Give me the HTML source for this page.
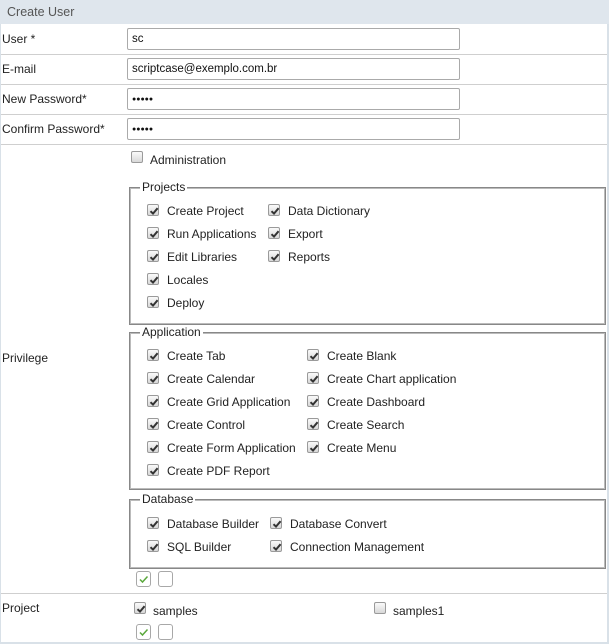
<!DOCTYPE html>
<html><head><meta charset="utf-8"><style>
*{margin:0;padding:0;box-sizing:border-box}
body{width:609px;height:644px;background:#fff;font-family:"Liberation Sans",Arial,sans-serif;font-size:12px;color:#222;position:relative;overflow:hidden}
.frame{position:absolute;left:0;top:0;width:609px;height:644px;border:1px solid #d9e1e8;border-right-width:2px;border-top:0;border-bottom-width:2px}
.hdr{position:absolute;left:0;top:0;width:609px;height:24px;background:#dfe6ed;color:#555;font-size:12.5px;padding:5px 0 0 7px}
.hl{position:absolute;left:1px;width:606px;height:1px;background:#cfcfcf}
.inp{position:absolute;left:127px;width:333px;height:22px;border:1px solid #aaa;border-radius:2px;padding:4px 0 0 4px;font-size:11.5px;color:#111}
.pw{font-size:7px;padding-top:7px;letter-spacing:0}
.lb{position:absolute;left:2px;font-size:12px}
.cb{position:absolute;width:12px;height:12px;border:1px solid #9a9a9a;border-radius:2px;background:linear-gradient(#fafafa,#d8d8d8)}
.cb svg{position:absolute;left:1px;top:1px}
.fs{position:absolute;left:129px;width:477px;border:1px solid #888;outline:1px solid #bbb;outline-offset:-2px}
.lg{position:absolute;background:#fff;padding:0 2px;font-size:12px}
.t{position:absolute;font-size:12px;white-space:nowrap}
.gb{position:absolute;width:15px;height:16px;border:1px solid #a8a8a8;border-radius:3px;background:#fff}
</style></head><body>
<div class="frame"></div>
<div class="hdr">Create User</div>
<div class="hl" style="top:54px"></div>
<div class="hl" style="top:84px"></div>
<div class="hl" style="top:114px"></div>
<div class="hl" style="top:144px"></div>
<div class="hl" style="top:593px"></div>

<div class="lb" style="top:32px">User *</div>
<div class="lb" style="top:62px">E-mail</div>
<div class="lb" style="top:92px">New Password*</div>
<div class="lb" style="top:122px">Confirm Password*</div>
<div class="lb" style="top:351px">Privilege</div>
<div class="lb" style="top:601px">Project</div>

<div class="inp" style="top:28px">sc</div>
<div class="inp" style="top:58px">scriptcase@exemplo.com.br</div>
<div class="inp pw" style="top:88px">●●●●●</div>
<div class="inp pw" style="top:118px">●●●●●</div>

<div class="fs" style="top:187px;height:138px"></div>
<div class="lg" style="left:140px;top:180px">Projects</div>
<div class="fs" style="top:332px;height:158px"></div>
<div class="lg" style="left:140px;top:325px">Application</div>
<div class="fs" style="top:499px;height:70px"></div>
<div class="lg" style="left:140px;top:492px">Database</div>

<script>
var ck='<svg width="10" height="10" viewBox="0 0 10 10"><path d="M1.5 5.2 L4 7.6 L8.6 2.2" stroke="#333" stroke-width="2" fill="none"/></svg>';
function cb(x,y,c){document.write('<div class="cb" style="left:'+x+'px;top:'+y+'px">'+(c?ck:'')+'</div>');}
function t(x,y,s){document.write('<div class="t" style="left:'+x+'px;top:'+y+'px">'+s+'</div>');}
function item(x,tx,y,s){cb(x,y-7,1);t(tx,y-7,s);}
cb(131,151,0);t(150,153,'Administration');
['Create Project','Run Applications','Edit Libraries','Locales','Deploy'].forEach(function(s,i){item(147,167,211+23*i,s)});
['Data Dictionary','Export','Reports'].forEach(function(s,i){item(268,288,211+23*i,s)});
['Create Tab','Create Calendar','Create Grid Application','Create Control','Create Form Application','Create PDF Report'].forEach(function(s,i){item(147,167,356+23*i,s)});
['Create Blank','Create Chart application','Create Dashboard','Create Search','Create Menu'].forEach(function(s,i){item(307,327,356+23*i,s)});
item(147,167,524,'Database Builder');item(270,290,524,'Database Convert');
item(147,167,547,'SQL Builder');item(270,290,547,'Connection Management');
cb(134,602,1);t(153,604,'samples');
cb(374,602,0);t(393,604,'samples1');
var g='<svg width="13" height="14" viewBox="0 0 13 14" style="position:absolute;left:0;top:0"><path d="M3 7.5 L5.5 10 L10.5 4.5" stroke="#5aa83c" stroke-width="1.5" fill="none"/></svg>';
[571,624].forEach(function(y){document.write('<div class="gb" style="left:136px;top:'+y+'px">'+g+'</div><div class="gb" style="left:158px;top:'+y+'px"></div>')});
</script>
</body></html>
